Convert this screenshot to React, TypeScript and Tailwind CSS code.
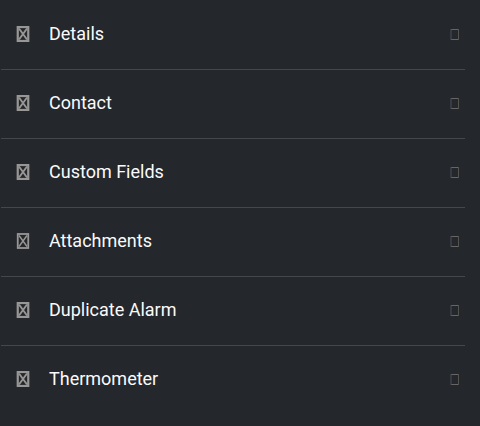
import React from "react";

type Section = {
  id: string;
  title: string;
  thin?: boolean;
};

const sections: Section[] = [
  { id: "details", title: "Details" },
  { id: "contact", title: "Contact" },
  { id: "custom-fields", title: "Custom Fields" },
  { id: "attachments", title: "Attachments", thin: true },
  { id: "duplicate-alarm", title: "Duplicate Alarm" },
  { id: "thermometer", title: "Thermometer" },
];

// crossed box in front of the section title
const SectionIcon = ({ thin }: { thin?: boolean }) => (
  <svg
    width="14"
    height="16"
    viewBox="0 0 14 16"
    fill="none"
    stroke="#999795"
    aria-hidden="true"
    className="shrink-0"
  >
    <rect x="1.75" y="1" width="10.5" height="14" strokeWidth={thin ? 1.8 : 2.2} />
    <path d="M3 2.5 11 13.5M11 2.5 3 13.5" strokeWidth={thin ? 1.4 : 1.9} />
  </svg>
);

// empty box at the end of the row
const ToggleIcon = () => (
  <svg
    width="10"
    height="12"
    viewBox="0 0 10 12"
    fill="none"
    stroke="#666666"
    aria-hidden="true"
    className="shrink-0"
  >
    <path d="M1 1.5H9M1 11.5H9" />
    <path d="M1 1V12" stroke="#4c5359" />
    <path d="M8.5 1V12" stroke="#55534e" />
  </svg>
);

const App = () => {
  return (
    <main className="min-h-screen bg-[#24272c] pt-px pr-[15px] pl-px font-['Roboto','Liberation_Sans',sans-serif]">
      <ul className="divide-y divide-[#44484c]">
        {sections.map((section) => (
          <li key={section.id}>
            <button
              type="button"
              className="flex h-17 w-full items-center pr-[5px] pb-0.5 pl-[15px] text-left"
            >
              <SectionIcon thin={section.thin} />
              <span className="ml-[19px] flex-1 text-lg leading-6 text-[#fafafa]">
                {section.title}
              </span>
              <ToggleIcon />
            </button>
          </li>
        ))}
      </ul>
    </main>
  );
};

export default App;
